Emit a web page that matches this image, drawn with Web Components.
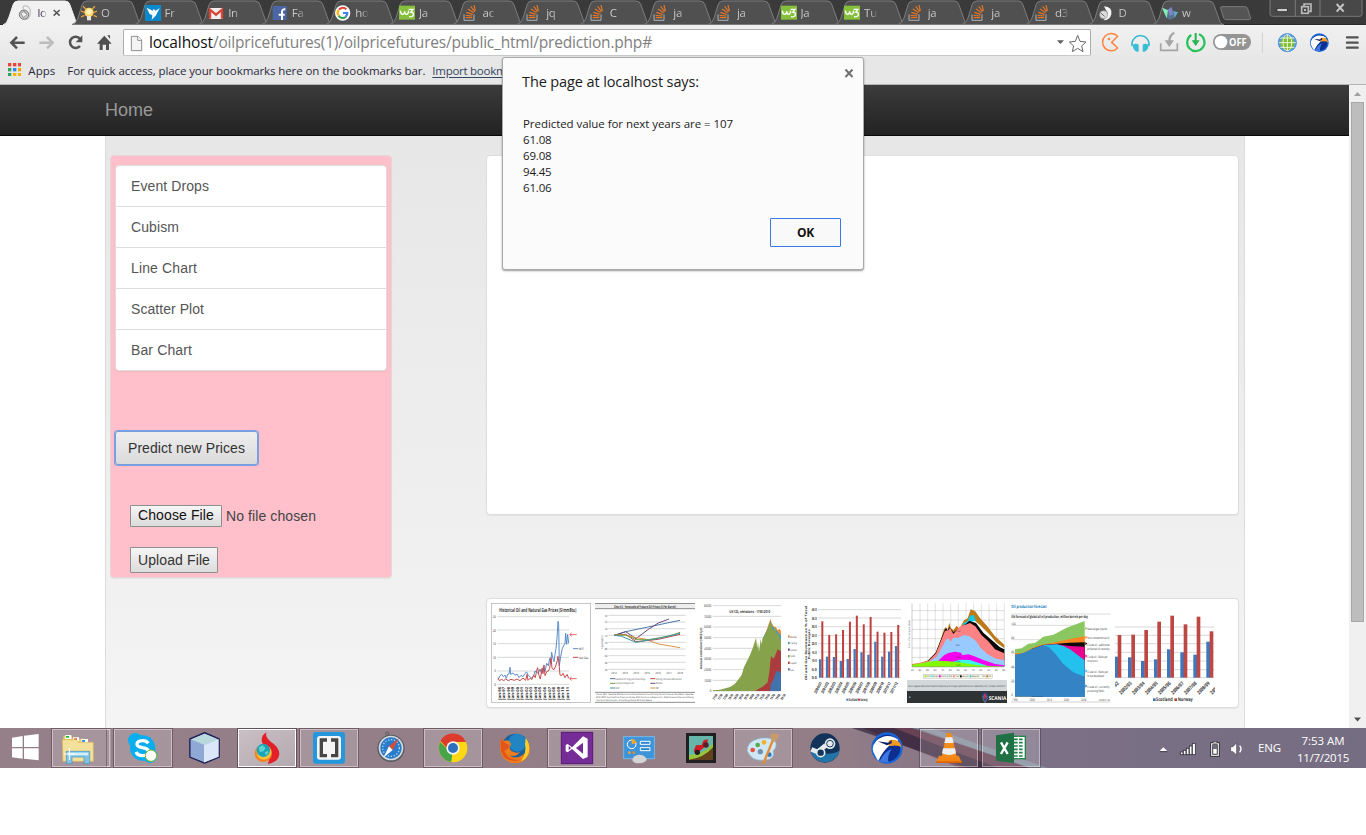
<!DOCTYPE html>
<html lang="en">
<head>
<meta charset="utf-8">
<title>localhost</title>
<style>
html,body{margin:0;padding:0;background:#fff;width:1366px;height:835px;overflow:hidden}
body{font-family:"Open Sans","Noto Sans",sans-serif;position:relative}
</style>
</head>
<body>
<desktop-screen></desktop-screen>
<script>
/* Icon table: [x, y, w, h, markup]; drawn at one third of its own units. */
const so = '<path d="M3 0v18h30V0" transform="translate(0 28)" fill="none" stroke="#a9b4bb" stroke-width="3"/><path d="M8 38h20M8 31l20 2M10 22l19 6M15 12l17 11M23 4l12 16M33 0l4 18" fill="none" stroke="#e2762a" stroke-width="3.6"/>';
const w3 = '<rect width="48" height="42" y="2" fill="#86bf3c"/><path d="M4 17q1 11 7 11 5 0 6-9 1 9 6 9 5 0 6-11M29 13h13l-7 8q9 0 8 8-1 8-13 6" fill="none" stroke="#fff" stroke-width="4"/>';
const eagle = '<circle r="47" fill="#1565d8"/><circle r="40" fill="#0d2f8f"/><path d="M-36 22A42 42 0 0 1-43 2Q-40-24-12-34 14-40 34-24L20-8 8-8Q-14 12-26 38-32 32-36 22z" fill="#fff"/><path d="M8-24Q40-30 44 0 36-10 8-6-2-14 8-24z" fill="#f79a22"/><path d="M-28-20 4-16 14-24 14-14 0-8z" fill="#10206a"/><path d="M-22 40Q-10 12 14 2 0 24 4 44z" fill="#3f77e0"/>';
const I = {
 fav0:[0,0,48,48,'<path d="M20 12Q14 2 26 2q14 4 14 20 0 18-14 22" fill="none" stroke="#c5c5c5" stroke-width="4"/><circle cx="21" cy="29" r="14" fill="#c9c9c9" stroke="#777" stroke-width="3"/><path d="M12 25q9-10 18 2-4 10-12 10zM20 16l6 10" fill="#eee" stroke="#777" stroke-width="2"/>'],
 bulb:[0,0,48,48,'<path d="M0 18l10 4M48 18l-9 4M6 4l8 8M42 4l-8 8M0 36l10-5M48 36l-10-5" stroke="#eda233" stroke-width="4"/><circle cx="24" cy="22" r="14" fill="#ffd768"/><circle cx="24" cy="20" r="8" fill="#fff2bd"/><rect x="18" y="33" width="12" height="13" fill="#e8e5dc"/>'],
 bird:[0,0,48,48,'<rect width="48" height="48" fill="#0b89cf"/><path d="M5 8 23 17 26 12 32 17 44 9 32 32 20 44 22 31 14 27z" fill="#fff"/>'],
 gmail:[0,0,48,48,'<rect x="3" y="9" width="42" height="33" rx="2" fill="#eee"/><path d="M6 41V14L24 29 42 14V41" fill="none" stroke="#d94436" stroke-width="7"/>'],
 fb:[0,0,48,48,'<rect x="2" y="3" width="42" height="42" fill="#4a66a5"/><path d="M30 45V29h8M20 29h10V20q0-8 10-7" fill="none" stroke="#fff" stroke-width="6"/>'],
 goog:[0,0,48,48,'<circle cx="23" cy="24" r="23" fill="#fff"/><g fill="none" stroke-width="6.5"><path d="M12 14A14 14 0 0 1 34 13" stroke="#e44134"/><path d="M11 32A14 14 0 0 1 11 15" stroke="#f6b90a"/><path d="M33 35A14 14 0 0 1 11 32" stroke="#33a551"/><path d="M24 24H37Q37 30 32 35" stroke="#3f80ef"/></g>'],
 w3:[0,0,48,48,w3], so:[0,0,48,48,so],
 dove:[0,0,48,48,'<path d="M18 4Q44 6 40 28 36 46 16 46 22 42 24 34 34 26 24 16z" fill="#f4f4f4"/><circle cx="17" cy="29" r="12" fill="#ddd" stroke="#999" stroke-width="2"/><path d="M8 24l12 10" stroke="#666" stroke-width="3"/>'],
 gem:[0,0,48,48,'<path d="M0 8 18 14 28 6 34 18 48 22 38 38 26 44 14 40z" fill="#53738e"/><path d="M0 8 18 16 14 40z" fill="#83edb4"/><path d="M18 14 28 6 34 28 22 32z" fill="#7f85c4"/><path d="M34 18 48 22 38 38z" fill="#5fa6c4"/>'],
 tabx:[0,0,30,48,'<path d="M5 15 23 32M23 15 5 32" stroke="#565656" stroke-width="4.5"/>'],
 newtab:[940,0,100,75,'<path d="M948 20H1018Q1024 20 1026 26L1035 55Q1035 59 1030 59H962Q956 59 954 54L945 25Q944 20 948 20z" fill="#555" stroke="#7b7b7b" stroke-width="3"/>'],
 win:[1089,0,291,54,'<path d="M1092 0V42Q1092 49 1100 49H1360Q1368 49 1368 42V0" fill="#484848" stroke="#797979" stroke-width="3"/><path d="M1168 0V49M1242 0V49" stroke="#797979" stroke-width="3"/><rect x="1113" y="25" width="31" height="10" fill="#ccc" stroke="#222" stroke-width="2"/><g fill="none" stroke="#b9b9b9" stroke-width="5"><path d="M1194 18V12H1215V34H1209"/><rect x="1187" y="20" width="20" height="20"/></g><rect x="1194" y="27" width="6" height="6" fill="#bbb"/><path d="M1292 12 1313 35M1313 12 1292 35" stroke="#c4c4c4" stroke-width="6"/>'],
 back:[0,75,105,96,'<path d="M74 128H35M51 111 34 128 51 145" fill="none" stroke="#535353" stroke-width="7.5"/>'],
 fwd:[105,75,90,96,'<path d="M118 128H157M141 111 158 128 141 145" fill="none" stroke="#bdbdbd" stroke-width="7.5"/>'],
 reload:[195,75,78,96,'<path d="M240 138A17 17 0 1 1 240 116" fill="none" stroke="#535353" stroke-width="7.5"/><path d="M247 106V127H227z" fill="#535353"/>'],
 home:[273,75,96,96,'<path d="M313 107 335 131H327V150H318V134H308V150H299V131H291zM322 106H330V117z" fill="#4f4f4f"/>'],
 page:[390,75,45,96,'<path d="M394 106H414L425 117V149H394z" fill="#f3f3f3" stroke="#8d8d8d" stroke-width="3"/><path d="M413 106V118H425" fill="#fff" stroke="#8d8d8d" stroke-width="3"/>'],
 star:[447,75,102,96,'<path d="M453 118H474L463 129z" fill="#5f5f5f"/><path d="M515 103 522 121 540 123 527 135 531 152 515 142 499 152 503 135 490 123 508 121z" fill="#fff" stroke="#686868" stroke-width="3" stroke-linejoin="round"/>'],
 pac:[555,75,102,96,'<path d="M635 109A26 26 0 1 0 635 144L617 127z" fill="none" stroke="#ff8340" stroke-width="4.5" stroke-linejoin="round"/><circle cx="609" cy="117" r="4" fill="#ff8340"/>'],
 phones:[657,75,90,96,'<path d="M678 138A26 26 0 1 1 729 138" fill="none" stroke="#25b4ce" stroke-width="4"/><path d="M680 134Q690 128 698 134V155H692Q680 149 680 134zM728 134Q718 128 710 134V155H716Q728 149 728 134z" fill="#39bdd5"/>'],
 inbox:[747,75,81,96,'<path d="M764 130V151H814V130" fill="none" stroke="#a5a5a5" stroke-width="5"/><path d="M805 98Q790 106 790 124" fill="none" stroke="#a5a5a5" stroke-width="7"/><path d="M776 121H804L790 141z" fill="#a5a5a5"/>'],
 down:[828,75,81,96,'<path d="M879 103A26 26 0 1 1 856 105" fill="none" stroke="#25c35a" stroke-width="6.5"/><path d="M869 99V126" stroke="#25b350" stroke-width="6"/><path d="M857 121H881L869 138z" fill="#25b350"/>'],
 off:[909,75,141,96,'<rect x="921" y="102" width="114" height="48" rx="24" fill="#949494"/><circle cx="945" cy="126" r="19" fill="#fff"/><text x="969" y="137" font-family="Open Sans,sans-serif" font-weight="700" font-size="29" fill="#fff" textLength="53" lengthAdjust="spacingAndGlyphs">OFF</text>'],
 sep:[1050,75,42,96,'<path d="M1069 98V158" stroke="#cfcfcf" stroke-width="3"/>'],
 globe:[1092,75,99,96,'<circle cx="1144" cy="128" r="28" fill="#5f9fe0"/><circle cx="1144" cy="130" r="21" fill="#7dbd2c"/><g fill="none" stroke="#e9f4dc" stroke-width="3"><ellipse cx="1144" cy="128" rx="13" ry="25"/><path d="M1144 101V155M1118 128H1170M1122 114H1166M1122 142H1166"/></g><circle cx="1144" cy="128" r="27" fill="none" stroke="#5294d8" stroke-width="3"/>'],
 eagles:[1191,75,99,96,'<g transform="translate(1240 128) scale(.6)">'+eagle+'</g>'],
 menu:[1290,75,90,96,'<path d="M1323 112H1355M1323 128H1355M1323 143H1355" stroke="#535353" stroke-width="7" stroke-linecap="round"/>'],
 apps:[24,189,40,40,['#ea4335','#ea4335','#ea4335','#34a060','#2c87f5','#f5a300','#34a060','#f5b400','#f5b400'].map((c,i)=>`<rect x="${24+i%3*15}" y="${189+(i/3|0)*15}" width="10" height="10" fill="${c}"/>`).join('')],
 startb:[0,24,153,120,'<path d="M36 53 68 48V81H36zM72 47 116 42V81H72zM36 85H68V116L36 112zM72 85H116V121L72 116z" fill="#fff"/>'],
 explorer:[153,24,180,120,'<path d="M190 47h24l4 9h38v67H190z" fill="#e6c967"/><path d="M196 45h18v12h-18zM219 52h18v12h-18zM244 57h20v12h-20z" fill="#fff"/><path d="M198 48h9v5h-9z" fill="#12b93c"/><path d="M222 55h9v5h-9z" fill="#e5522d"/><path d="M246 60h9v6h-9z" fill="#3097e8"/><path d="M187 59h42l5 8h46v57H189z" fill="#f3e09a" stroke="#ddb75a" stroke-width="2"/><path d="M199 94H269V131H252V111H216V131H199z" fill="#7fc2e4" stroke="#3f93bd" stroke-width="2"/><path d="M203 98h62v8h-62z" fill="#d2effa"/><path d="M208 84v36M192 102h34" stroke="#fff" stroke-width="3"/>'],
 skype:[339,24,180,120,'<circle cx="428" cy="84" r="38" fill="#08aeee"/><circle cx="406" cy="61" r="22" fill="#08aeee"/><circle cx="450" cy="107" r="22" fill="#08aeee"/><path d="M445 70Q438 61 427 62 411 63 411 73 411 80 427 83 446 86 446 96 444 107 428 107 413 107 408 96" fill="none" stroke="#fff" stroke-width="10"/><circle cx="453" cy="107" r="17" fill="#fff" stroke="#7fba20" stroke-width="3"/>'],
 cube:[525,24,180,120,'<path d="M614 38 657 57V111L614 129 570 111V57z" fill="#b7cbe9" stroke="#1d2058" stroke-width="5" stroke-linejoin="round"/><path d="M572 58 614 75V127L572 110z" fill="#8fa8d4"/><path d="M656 58 614 75V127L656 110z" fill="#dbe7f8"/><path d="M614 41 654 58 614 74 574 58z" fill="#b9d9dc"/><path d="M614 75V127" stroke="#fff" stroke-width="2"/>'],
 torch:[711,24,180,120,'<path d="M799 37Q795 53 812 65 838 80 838 103 836 126 803 132 812 111 807 93 787 76 785 62 784 46 799 37z" fill="#e3202a"/><circle cx="790" cy="100" r="26" fill="#f58320"/><circle cx="792" cy="97" r="22" fill="#fbc33c"/><circle cx="790" cy="91" r="20" fill="#19a5b8"/><path d="M776 82l12-6 8 7-4 9-12 5zM794 98l9-6 3 5-8 9z" fill="#62d0d0"/>'],
 brackets:[897,24,180,120,'<rect x="939" y="36" width="96" height="95" rx="9" fill="#2597dc"/><rect x="951" y="48" width="72" height="71" rx="9" fill="#f5f5f5"/><path d="M981 60H964V107H981M993 60H1010V107H993" fill="none" stroke="#464646" stroke-width="10"/>'],
 safari:[1083,24,180,120,'<circle cx="1162" cy="41" r="5" fill="none" stroke="#555" stroke-width="3"/><circle cx="1173" cy="85" r="41" fill="#565c62"/><circle cx="1173" cy="84" r="37" fill="#d7dadd"/><circle cx="1173" cy="84" r="32" fill="#2a7ccb"/><circle cx="1173" cy="84" r="25" fill="none" stroke="#a9d5ef" stroke-width="4" stroke-dasharray="4 5"/><path d="M1197 55 1178 90 1167 79z" fill="#e2472f"/><path d="M1150 113 1178 90 1167 79z" fill="#fff"/>'],
 chrome:[9,24,180,120,'<circle cx="99" cy="84" r="42" fill="#e8c61c"/><path d="M99 84 62 64A42 42 0 0 1 137 65z" fill="#dd3b2c"/><path d="M61 66A42 42 0 0 0 94 126L113 91 85 91z" fill="#47a447"/><path d="M137 65H99V84L94 126A42 42 0 0 0 137 65z" fill="#fbd813"/><path d="M62 62A42 42 0 0 1 137 65H99L82 86z" fill="#dd3b2c"/><circle cx="99" cy="84" r="20" fill="#f4f4f4"/><circle cx="99" cy="84" r="15" fill="#2e70bd"/>'],
 firefox:[195,24,180,120,'<circle cx="287" cy="83" r="42" fill="#1b619f"/><circle cx="292" cy="68" r="27" fill="#2285c3"/><path d="M244 55Q249 66 259 61 275 63 272 76 264 86 276 94 288 101 300 96 285 115 266 104 285 121 309 104 326 90 317 58 337 77 327 103 312 131 284 130 241 124 240 84 239 66 244 55z" fill="#ee7d1d"/><path d="M317 53Q331 69 327 96 320 119 303 124 321 98 315 73z" fill="#f7cf2c"/><path d="M244 55Q237 89 252 111 275 130 303 119 264 123 253 92 267 87 269 75 252 71 244 55z" fill="#e3551b"/>'],
 vs:[381,24,180,120,'<rect x="424" y="37" width="94" height="94" fill="#762c96" stroke="#5a1679" stroke-width="3"/><path d="M437 75 443 72 456 82 489 49 503 56V111L489 117 456 87 443 97 437 94zM446 78V91L453 84zM489 68 468 84 489 101z" fill="#fff" fill-rule="evenodd"/>'],
 control:[567,24,180,120,'<rect x="611" y="50" width="92" height="66" fill="#3e94d8" stroke="#75b8ea" stroke-width="3"/><circle cx="635" cy="73" r="13" fill="none" stroke="#fff" stroke-width="3"/><path d="M635 73V57A16 16 0 0 1 650 68z" fill="#f5a527"/><path d="M661 64H690V73H661zM661 83H690V92H661z" fill="#2a86cf" stroke="#fff" stroke-width="3"/><circle cx="628" cy="98" r="4" fill="#f5a527"/><circle cx="641" cy="98" r="4" fill="#e88b2d"/><path d="M637 120Q638 106 658 104 679 106 680 120 672 131 652 130 639 129 637 120z" fill="#d4d4d4"/>'],
 hill:[753,24,180,120,'<rect x="798" y="39" width="90" height="90" fill="#221f20"/><rect x="807" y="48" width="72" height="72" fill="#65b7a9"/><path d="M807 115Q851 113 879 78V120H807z" fill="#65421e"/><path d="M807 106Q850 104 879 71V82Q850 115 807 119z" fill="#96c53c"/><path d="M821 92 828 76 845 75 851 61 864 58 860 76 843 90 829 101z" fill="#ce1d24"/><circle cx="832" cy="97" r="8" fill="#28161a"/><circle cx="858" cy="75" r="8" fill="#55232a"/>'],
 paint:[939,24,180,120,'<path d="M982 93Q980 66 1013 57 1050 48 1065 64 1074 78 1059 93 1067 116 1036 120 995 126 982 93z" fill="#cfe7f4" stroke="#8ebcd6" stroke-width="2"/><circle cx="998" cy="90" r="7" fill="#e25142"/><circle cx="1013" cy="75" r="7" fill="#51ad45"/><circle cx="1032" cy="67" r="7" fill="#f2af28"/><circle cx="1021" cy="95" r="8" fill="#7291a8"/><circle cx="1048" cy="104" r="7" fill="#2f79c7"/><path d="M1030 131 1058 62" stroke="#e78a2e" stroke-width="7"/><path d="M1051 42Q1066 37 1077 45 1074 60 1063 65L1054 62z" fill="#c89c6a"/>'],
 steam:[1125,24,180,120,'<circle cx="1215" cy="84" r="44" fill="#12345a"/><path d="M1172 92A44 44 0 0 0 1258 92Q1230 110 1172 92z" fill="#2375a9"/><path d="M1174 88 1193 96 1217 76" fill="none" stroke="#e6eaee" stroke-width="14"/><circle cx="1230" cy="71" r="16" fill="#e6eaee"/><circle cx="1230" cy="71" r="10" fill="#e6eaee" stroke="#173b61" stroke-width="3"/><circle cx="1202" cy="98" r="12" fill="#12345a" stroke="#e6eaee" stroke-width="5"/>'],
 eagleb:[21,24,180,120,'<g transform="translate(111 84)">'+eagle+'</g>'],
 vlc:[207,24,180,120,'<path d="M267 107H326L336 128H258z" fill="#f48413"/><path d="M290 40Q297 37 304 40L320 108Q300 122 276 108z" fill="#f38b1a"/><path d="M287 52H307L311 69H283zM279 85H315L318 100Q298 110 276 100z" fill="#ededed"/><path d="M258 124H336V129H258z" fill="#db6507"/>'],
 excel:[393,24,180,120,'<rect x="485" y="49" width="41" height="67" fill="#fff" stroke="#218349" stroke-width="4"/><path d="M492 58H518M492 68H518M492 78H518M492 88H518M492 98H518M492 108H518" stroke="#218349" stroke-width="5"/><path d="M505 50V115" stroke="#fff" stroke-width="4"/><path d="M438 46 492 38V129L438 122z" fill="#207245"/><path d="M453 67 473 102M473 67 453 102" stroke="#fff" stroke-width="7"/>'],
 tray:[915,24,285,120,'<path d="M929 93 940 82 952 93z" fill="#fff"/><path d="M929 95H952" stroke="#484252" stroke-width="3"/><g fill="#fff" stroke="#38343f" stroke-width="2.5"><rect x="991" y="96" width="8" height="8"/><rect x="1000" y="91" width="8" height="13"/><rect x="1009" y="85" width="8" height="19"/><rect x="1018" y="78" width="8" height="26"/><rect x="1027" y="70" width="9" height="34"/></g><rect x="1082" y="68" width="26" height="41" fill="#fff" stroke="#302d35" stroke-width="3"/><rect x="1089" y="64" width="12" height="5" fill="#fff" stroke="#302d35" stroke-width="2"/><rect x="1088" y="74" width="14" height="29" fill="#716b7d" stroke="#302d35" stroke-width="2"/><rect x="1090" y="87" width="10" height="14" fill="#fff"/><path d="M1142 80H1149L1160 68V106L1149 95H1142z" fill="#fff" stroke="#45404e" stroke-width="2"/><path d="M1169 77Q1177 87 1169 97" fill="none" stroke="#fff" stroke-width="4"/>']
};
const define=(n,html,setup)=>customElements.define(n,class extends HTMLElement{
  connectedCallback(){ if(this.shadowRoot)return; const r=this.attachShadow({mode:'open'}); r.innerHTML=typeof html==='function'?html(this):html; if(setup)setup(this,r); }
});
define('ui-icon',el=>{const [x,y,w,h,m]=I[el.getAttribute('name')];
 return `<style>:host{display:block;flex:none;width:${w/3}px;height:${h/3}px}svg{display:block}</style><svg width="${w/3}" height="${h/3}" viewBox="${x} ${y} ${w} ${h}">${m}</svg>`});

/* Text that tracks its letters to a given width. */
define('fit-text','<style>:host{display:inline-block;white-space:pre}</style><slot></slot>',el=>{
 const w=+el.getAttribute('w'),n=el.textContent.length,c=el.getBoundingClientRect().width;
 el.style.letterSpacing=((w-c)/n).toFixed(3)+'px';});

define('browser-tab',el=>{const a=el.hasAttribute('active');
 const p=a?'M-6 25Q-2 24 0 17L4 5Q5 1 9 1H56Q60 1 61 5L66 19Q67 25 71 25z':'M-1 24.5Q3 24 5 18L9 5Q10 1 14 1H55Q59 1 60 5L65 19Q66 24 70 24.5z';
 return `<style>:host{display:grid;grid-template-columns:16px 18px 12px;column-gap:4px;padding-left:8.4px;box-sizing:border-box;width:63.6px;height:25px;flex:none;position:relative;font-size:11.5px;line-height:25px;color:${a?'#493559':'#c8c8c8'}}
 .s{position:absolute;left:0;top:0;overflow:visible}ui-icon{position:relative;margin-top:5px}span{position:relative;overflow:hidden;${a?'width:10px':'width:14px'};white-space:nowrap;letter-spacing:-.3px;-webkit-mask:linear-gradient(90deg,#000 45%,transparent)}
 .x{margin-left:-7px}</style><svg class="s" width="64" height="25"><path d="${p}" fill="${a?'#f1f1f1':'#505050'}" stroke="${a?'#f1f1f1':'#7c7c7c'}"/></svg><ui-icon name="${el.getAttribute('icon')}"></ui-icon><span><slot></slot></span>${a?'<ui-icon class="x" name="tabx"></ui-icon>':''}`});

const tabs=[['fav0','lo'],['bulb','O'],['bird','Fr'],['gmail','In'],['fb','Fa'],['goog','ho'],['w3','Ja'],['so','ac'],['so','jq'],['so','C'],['so','ja'],['so','ja'],['w3','Ja'],['w3','Tu'],['so','ja'],['so','ja'],['so','d3'],['dove','D'],['gem','w']];
define('tab-strip',`<style>:host{display:flex;height:25px;background:#3a3a3a;padding-left:9px;box-sizing:border-box;border-bottom:1px solid #2c2c2c}
 .n{margin-left:2px}.w{margin-left:16px}</style>${tabs.map((t,i)=>`<browser-tab icon="${t[0]}"${i?'':' active'}>${t[1]}</browser-tab>`).join('')}<ui-icon class="n" name="newtab"></ui-icon><ui-icon class="w" name="win"></ui-icon>`);

define('nav-toolbar',`<style>:host{display:flex;height:32px;background:linear-gradient(#f1f1f1,#e8e8e8)}
 .u{display:flex;box-sizing:border-box;width:968px;height:27px;margin-top:4px;background:#fff;border:1px solid #adadad;border-bottom-color:#c8c8c8;border-radius:2px;align-items:center;font-size:15.5px;line-height:25px;color:#808080}
 .u ui-icon{margin-top:-2px;height:32px}.p{margin-left:6px}.t{margin-left:4px;flex:1;white-space:nowrap;margin-top:0}b{font-weight:400;color:#111}.b{margin-right:1px}</style>
 <ui-icon name="back"></ui-icon><ui-icon name="fwd"></ui-icon><ui-icon name="reload"></ui-icon><ui-icon name="home"></ui-icon>
 <div class="u"><ui-icon class="p" name="page"></ui-icon><div class="t"><b><fit-text w="64">localhost</fit-text></b><fit-text w="439">/oilpricefutures(1)/oilpricefutures/public_html/prediction.php#</fit-text></div><ui-icon class="b" name="star"></ui-icon></div>
 ${['pac','phones','inbox','down','off','sep','globe','eagles','menu'].map(n=>`<ui-icon name="${n}"></ui-icon>`).join('')}`);

define('bookmarks-bar',`<style>:host{display:flex;height:28px;box-sizing:border-box;background:#e7e7e7;border-bottom:1px solid #b4b4b4;padding-left:8px;font-size:11.5px;line-height:27px;color:#2a2a3c}
 ui-icon{margin:6px 7px 0 0}.a{margin-right:12px}.m{margin-right:7px}.l{text-decoration:underline;text-underline-offset:2px;color:#34465e}</style>
 <ui-icon name="apps"></ui-icon><fit-text class="a" w="27">Apps</fit-text><fit-text class="m" w="358">For quick access, place your bookmarks here on the bookmarks bar.</fit-text><fit-text class="l" w="74">Import bookm</fit-text>`);

define('nav-list','<style>:host{display:block;box-sizing:border-box;height:206px;background:#fff;border:1px solid #ddd;border-radius:4px;box-shadow:0 1px 2px rgba(0,0,0,.06)}</style><slot></slot>');
define('nav-item','<style>:host{display:block;box-sizing:border-box;height:41px;padding-left:15px;line-height:40px;color:#555;border-bottom:1px solid #ddd}:host(:last-child){border:0}</style><slot></slot>');

define('side-panel',`<style>:host{display:block;box-sizing:border-box;width:282px;height:423px;background:#ffc0cb;border:1px solid #e9d4d8;border-radius:4px;padding:9px 4px 0;box-shadow:0 1px 1px rgba(0,0,0,.05);font:14px/20px "Liberation Sans",Arial,sans-serif}
 button{display:block;font:inherit;padding:0;box-sizing:border-box}
 .p{width:143px;height:34px;margin:60px 0 0;border:1px solid #74a0e0;border-radius:3px;background:linear-gradient(#eee,#dadada);color:#333;box-shadow:0 0 0 1px #7f9fe0;outline:0}
 .f{display:flex;gap:4px;margin:40px 0 0 15px;line-height:22px;color:#444}
 .c{width:92px;height:22px;line-height:19px;padding-bottom:1px;border:1px solid #8f8f8f;border-radius:1px;background:linear-gradient(#f6f6f6,#dcdcdc);color:#111}
 .u{width:88px;height:26px;border:1px solid #8f8f8f;border-radius:1px;background:linear-gradient(#f6f6f6,#dcdcdc);color:#333;margin:20px 0 0 15px}</style>
 <nav-list><nav-item><fit-text w="78">Event Drops</fit-text></nav-item><nav-item><fit-text w="48">Cubism</fit-text></nav-item><nav-item><fit-text w="66">Line Chart</fit-text></nav-item><nav-item><fit-text w="73">Scatter Plot</fit-text></nav-item><nav-item><fit-text w="61">Bar Chart</fit-text></nav-item></nav-list>
 <button class="p"><fit-text w="117">Predict new Prices</fit-text></button><div class="f"><button class="c"><fit-text w="76">Choose File</fit-text></button><fit-text w="90">No file chosen</fit-text></div><button class="u"><fit-text w="72">Upload File</fit-text></button>`);

/* Charts, in a 300-unit square whose origin is given first. */
const T=(x,y,s,w,t,o='')=>`<text x="${x}" y="${y}" font-size="${s}" textLength="${w}" lengthAdjust="spacingAndGlyphs" ${o}>${t}</text>`;
const L=(x1,x2,ys,c='#b5b5b5',w=1.6)=>`<path d="${ys.map(y=>`M${x1} ${y}H${x2}`).join('')}" stroke="${c}" stroke-width="${w}" fill="none"/>`;
const P=(d,c,w=3)=>`<polyline points="${d}" fill="none" stroke="${c}" stroke-width="${w}" stroke-linejoin="round"/>`;
const A=(d,c)=>`<polygon points="${d}" fill="${c}"/>`;
const seq=(n,f)=>Array.from({length:n},(_,i)=>f(i)).join('');
const C={
 oil:[18,24,'<rect x="19" y="25" width="298" height="297" fill="#fff" stroke="#aaa" stroke-width="2"/>'+T(43,52,17,231,'Historical Oil and Natural Gas Prices ($/mmBtu)','font-weight="700"')+L(37,252,[65,105,146,187,228,268])
  +[25,20,15,10,5,0].map((v,i)=>T(v>9?23:28,69+i*40.6,11,v>9?10:5,v)).join('')
  +P('39,254 45,242 50,238 55,245 60,240 64,250 68,238 72,237 75,217 77,238 84,234 90,241 96,237 102,248 108,241 114,245 120,235 125,231 130,242 136,246 140,250 146,242 150,228 155,232 160,235 165,222 170,236 175,215 180,230 185,205 190,212 194,190 197,205 200,172 203,188 207,200 210,178 213,160 216,130 219,79 221,88 223,212 227,185 232,160 237,150 240,145 242,115 245,148 248,118 251,145','#5b8cc9')
  +P('39,248 43,257 50,253 56,257 62,252 70,257 78,253 88,256 96,252 105,257 114,249 122,256 126,238 129,256 136,249 140,254 146,240 151,248 155,226 158,218 162,242 166,252 171,220 174,236 177,210 180,242 185,230 190,228 194,220 198,188 201,220 207,224 212,213 217,196 219,184 222,206 225,240 230,242 234,235 240,248 246,238 251,250','#c84a4b')
  +'<path d="M275 119H255M260 114L254 119 260 124M275 251H255M260 246L254 251 260 256" fill="none" stroke="#e4474a" stroke-width="2.5"/><path d="M264 161H280" stroke="#5b8cc9" stroke-width="3"/><path d="M264 187H280" stroke="#c84a4b" stroke-width="3"/>'+T(282,165,10,15,'WTI')+T(282,191,10,28,'Nat Gas')
  +seq(16,i=>`<text transform="translate(${47+i*13.6} 314) rotate(-90)" font-size="12" font-weight="700" textLength="38" lengthAdjust="spacingAndGlyphs">Jan-${String((96+i)%100).padStart(2,'0')}</text>`)],
 forecast:[330,24,'<rect x="330" y="25" width="300" height="298" fill="#fff"/><path d="M330 26h300v15H330z" fill="#eee"/><path d="M330 25.500H630M330 41H630M330 292H630M330 322H630" stroke="#777" stroke-width="2.500"/>'+T(387,38,11,186,'Chart 3 - Forecasts of Future Oil Prices ($ Per Barrel)','font-weight="700"')+L(370,602,[61,81,101,121,142,162,182,202,223])
  +seq(9,i=>T(359,65+i*20.2,9,8,180-i*20))+seq(7,i=>T(379+i*33,237,9,17,2012+i))
  +`<text transform="translate(355 162) rotate(-90)" font-size="8" textLength="40">$ per barrel</text>`
  +P('388,121 422,110 585,76','#4c78a8')+P('388,121 422,110 453,131 490,103 520,84 552,72','#674984')+P('388,120 422,120 453,128 480,132 520,147 585,158','#dc9443')+P('388,121 422,118 453,140 520,133 585,118','#b94a4d')+P('388,119 422,120 453,134 490,134 550,124 585,112','#7d9b44')+P('388,121 410,124 453,142 520,130 585,115','#379aa3')
  +[['Department for Energy and Climate Change','US Energy Information Administration','#4c78a8','#b94a4d'],['Economist Intelligence Unit','World Bank','#7d9b44','#674984'],['OECD','IMF','#379aa3','#dc9443']].map((r,i)=>`<path d="M375 ${251+i*14}H390" stroke="${r[2]}" stroke-width="3"/><path d="M496 ${251+i*14}H511" stroke="${r[3]}" stroke-width="3"/>`+T(391,254+i*14,8,[90,57,12][i],r[0])+T(512,254+i*14,8,[78,20,9][i],r[1])).join('')
  +T(334,301,7.5,292,'Source: DECC - December 2012; Economic and Fiscal Outlook, Ernst and Young; Economic Forecast; World Bank - December')+T(334,310,7.5,292,'2012; OECD; Fossil Fuel Price Projections October 2012; Economist Intelligence Unit - Global Forecasting Service; US Energy')+T(334,319,7.5,166,'Information Administration - Annual Energy Outlook 2012, Early Release')],
 co2:[-3,24,L(38,243,[32,64,96,128,160,192,224,256,288])+seq(9,i=>T(i<8?12:29,36+i*32,11,i<8?22:5,i<8?80000-i*10000:0))
  +`<text transform="translate(6 222) rotate(-90)" font-size="9" font-weight="700" textLength="124" lengthAdjust="spacingAndGlyphs">Annual emissions (MtC/yr)</text>`
  +A('195,120 205,90 212,71 215,84 222,95 228,96 232,106 240,101 243,110 243,288 195,288','#ea8b35')
  +A('190,125 205,98 212,78 215,90 222,98 228,104 234,112 243,122 243,288 190,288','#4a9bbb')
  +A('38,288 38,286 60,284 90,276 105,266 118,250 125,240 132,216 140,200 150,180 158,160 168,128 172,160 174,140 177,170 182,132 185,148 188,128 192,126 197,112 204,102 209,81 212,86 216,88 218,106 224,100 230,116 236,120 243,138 243,288','#86a34c')
  +A('165,288 190,274 203,262 208,230 213,182 218,190 222,190 227,178 233,163 243,169 243,288','#ac3b3e')
  +A('210,288 212,268 220,256 227,234 232,227 237,229 243,234 243,288','#4272aa')
  +T(88,54,12,122,'UK CO₂ emissions - 1750-2010','font-weight="700"')+[['Bunker','#e58637'],['Flaring','#4a9bbb'],['Cement','#674984'],['Solid','#86a34c'],['Liquid','#ac3b3e'],['Gas','#4272aa']].map((r,i)=>`<rect x="264" y="${121+i*19.7}" width="5" height="7" fill="${r[1]}"/>`+T(271,128+i*19.7,9,[20,20,20,14,18,10][i],r[0])).join('')
  +seq(14,i=>`<text transform="translate(${42+i*15.7} 316) rotate(-55)" font-size="10" font-weight="700" textLength="20" lengthAdjust="spacingAndGlyphs">${1750+i*20}</text>`)],
 bars:[309,24,L(354,603,[44,69,95,121,146,171,197,222,248])
  +[79,120,118,105,80,62,88,66,110,113,111,90].map((y,i)=>`<rect x="${357+i*20.7}" y="${[193,185,186,198,192,162,172,179,140,185,170,153][i]}" width="7" height="${248-[193,185,186,198,192,162,172,179,140,185,170,153][i]}" fill="#4478bb"/><rect x="${364+i*20.7}" y="${y}" width="6" height="${248-y}" fill="#bd413f"/>`
   +`<text transform="translate(${349+i*20.7} 296) rotate(-62)" font-size="12" font-weight="700" textLength="37" lengthAdjust="spacingAndGlyphs">${2000+i}/${String(i+1).padStart(2,'0')}</text>`).join('')
  +seq(9,i=>T(335,48+i*25.5,12,15,i<8?(40-i*5)+'.0':'0.0','font-weight="700"'))
  +`<text transform="translate(321 256) rotate(-90)" font-size="9" font-weight="700" textLength="224" lengthAdjust="spacingAndGlyphs">Oil and Gas Revenues as % of Total</text><text transform="translate(331 193) rotate(-90)" font-size="8" font-weight="700" textLength="90" lengthAdjust="spacingAndGlyphs">Public Receipts</text>`
  +'<rect x="439" y="311" width="6" height="6" fill="#4478bb"/><rect x="474" y="311" width="6" height="6" fill="#bd413f"/>'+T(446,318,12,27,'Scotland','font-weight="700"')+T(481,318,12,22,'Norway','font-weight="700"')],
 scania:[21,24,'<path d="M21 24h300v300H21z" fill="#fff"/>'+L(36,313,[47,75,103,131,159,187],'#999',1)+`<path d="${seq(12,i=>`M${60+i*23} 25V216`)}" stroke="#aaa"/>`
  +A('36,214 36,207 60,204 85,196 105,176 120,140 132,103 138,95 142,106 148,83 152,98 160,106 170,92 178,102 192,76 203,70 212,43 225,48 240,69 262,94 285,124 313,149 313,214','#bd7a17')
  +A('190,120 190,84 202,79 210,62 222,60 228,80 243,95 270,120 290,145 313,160 313,214 190,214','#14cbe5')
  +A('207,120 207,80 225,78 240,90 270,120 290,143 313,160 313,214 207,214','#fff')
  +A('80,214 85,196 108,172 120,140 135,103 140,100 142,108 148,96 160,112 200,85 208,77 228,84 250,113 275,135 300,157 313,163 313,214','#080808')
  +A('36,214 36,209 85,198 108,175 120,145 135,107 145,106 150,98 160,117 180,94 200,88 210,84 226,94 245,121 265,139 285,163 313,175 313,214','#fc8283')
  +A('36,214 85,201 110,185 128,153 138,134 145,130 152,140 160,128 175,128 190,121 208,123 228,138 242,159 262,177 285,190 313,196 313,214','#98caff')
  +A('36,214 90,206 115,197 132,181 145,174 165,170 183,173 187,181 205,178 223,184 250,195 285,207 313,211 313,214','#f600f0')
  +A('135,210 140,203 160,200 177,194 210,195 230,202 258,211 258,215 135,215','#3df6e9')
  +A('36,215 36,209 65,205 95,199 115,197 145,199 175,202 205,206 235,211 313,215','#82fb00')
  +`<path d="M36 25V216H313" stroke="#666" fill="none"/>`
  +[['P-Gulf',175,112],['Other',173,153],['Russia',175,190],['Europe',175,201],['US-48',175,212]].map(r=>T(r[1]-6,r[2],7,12,r[0])).join('')+seq(13,i=>T(32+i*22.9,228,8,9,String((30+i*10)%100).padStart(2,'0')))
  +'<rect x="70" y="238" width="207" height="12" fill="#f8f8e9" stroke="#999"/>'+[['US-48',74,12],['Europe',94,15],['Russia',117,15],['Other',140,11],['P-Gulf',159,13],['Heavy etc.',180,21],['Deepwater',209,23],['Polar',240,11],['NGL',259,9]].map((t,i)=>`<rect x="${t[1]}" y="241" width="5" height="6" fill="${['#82fb00','#3df6e9','#f600f0','#98caff','#fc8283','#000','#14cbe5','#fff','#bd7a17'][i]}"/>`+T(t[1]+6,247,7,t[2],t[0])).join('')
  +'<rect x="21" y="255" width="300" height="34" fill="#d2d7da"/><rect x="21" y="288" width="300" height="36" fill="#303334"/>'+T(24,276,8,292,'Source: Uppsala Hydrocarbon Depletion Study Group, Oil and gas liquids 2004 Scenario, Updated by Colin J. Campbell, 2004-05-15')
  +`<circle cx="255" cy="301" r="9" fill="#243f87"/><path d="M249 303h12v9l-6 11-6-11z" fill="#243f87" stroke="#aaa" stroke-width="1.5"/><path d="M252 296h6l-2 16h-3z" fill="#d33"/>`+T(266,316,16,53,'SCANIA','font-weight="700" fill="#fff"')+`<text transform="translate(29 160) rotate(-90)" font-size="7" textLength="84" lengthAdjust="spacingAndGlyphs">Billions of Barrels a year (Gb/a)</text><circle cx="29" cy="307" r="3" fill="#7b8bad"/>`],
 production:[333,24,T(334,38,13,106,'Oil production forecast','font-weight="700" fill="#157ab8"')+L(333,631,[57],'#bbb')+T(334,70,12,230,'IEA forecast of global all-oil production, million barrels per day','font-weight="700"')+L(333,556,[91,134,176,219,262],'#bbb')
  +A('345,305 345,162 365,160 385,146 405,144 430,125 460,119 500,98 530,87 554,78 554,305','#8bc760')
  +A('345,305 345,175 370,173 395,160 420,150 470,141 510,132 554,124 554,305','#fb8423')
  +A('395,162 430,150 470,146 510,143 554,142 554,305 395,305','#080808')
  +A('430,150 470,148 510,153 554,155 554,305 430,305','#e80491')
  +A('430,150 470,148 490,153 510,163 554,196 554,305 430,305','#24c1ef')
  +A('345,305 345,179 370,174 395,162 430,150 447,157 465,175 490,207 520,232 554,245 554,305','#3484c5')
  +[0,1,2,3,4,5].map(i=>T(334,90+i*42.600,10,i===5?5:i?9:13,100-i*20,'fill="#555"')).join('')+['1990','2000','2010','2020','2030'].map((t,i)=>T(337+i*51.5,318,10,16,t,'fill="#444"')).join('')+T(597,317,8,33,'SOURCE: IEA')
  +[[101,'#8bc760','Natural gas liquids'],[128,'#fb8423','Non-conventional oil'],[147,'#111','Crude oil - additional','enhanced oil recovery'],[184,'#e80491','Crude oil - fields yet','to be found'],[229,'#24c1ef','Crude oil - fields yet','to be developed'],[274,'#3484c5','Crude oil - currently','producing fields']].map((r,i)=>`<path d="M556 ${r[0]-6}l6 5-6 5z" fill="${r[1]}"/>`+T(562,r[0]+5,10,[59,66,67,60,61,66][i],r[2])+(r[3]?T(562,r[0]+17,10,[0,0,67,30,50,50][i],r[3]):'')).join('')+'<path d="M333 321H631" stroke="#bbb" stroke-width="2"/>'],
 norway:[645,24,L(645,943,[96,121,146,172,198,224,248])
  +[[653,120,185],[694,119,187],[733,105,198],[772,80,193],[811,62,163],[851,88,172],[890,65,179],[929,109,140]].map(r=>`<rect x="${r[0]-10}" y="${r[2]}" width="11" height="${248-r[2]}" fill="#3f77bd"/><rect x="${r[0]}" y="${r[1]}" width="11" height="${248-r[1]}" fill="#bd4743"/>`).join('')
  +seq(9,i=>`<text transform="translate(${624+i*39} 299) rotate(-45)" font-size="15" font-weight="700" textLength="47" lengthAdjust="spacingAndGlyphs">${2001+i}/${String(2+i).padStart(2,'0')}</text>`)
  +'<rect x="759" y="310" width="8" height="8" fill="#3f77bd"/><rect x="823" y="310" width="8" height="8" fill="#bd4743"/>'+T(768,319,15,50,'Scotland','font-weight="700"')+T(833,319,15,45,'Norway','font-weight="700"')]
};
define('chart-thumb',el=>{const c=C[el.getAttribute('kind')];return `<style>:host{display:block;width:100px;height:100px;flex:none}svg{display:block;overflow:hidden;font-family:"Open Sans",sans-serif}text{fill:#333;text-rendering:geometricPrecision}text[fill="#fff"]{fill:#fff}text[fill="#157ab8"]{fill:#157ab8}</style><svg width="100" height="100" viewBox="${c[0]} ${c[1]} 300 300">${c[2]}</svg>`});

define('content-panel','<style>:host{display:flex;gap:4px;box-sizing:border-box;width:753px;background:#fff;border:1px solid #ddd;border-radius:4px;padding:4px;box-shadow:0 1px 1px rgba(0,0,0,.05)}</style><slot></slot>');
define('site-page',`<style>:host{display:block;flex:1;background:#fff;font-family:"Liberation Sans",Arial,sans-serif}
 nav{box-sizing:border-box;height:51px;padding-left:105px;background:linear-gradient(#3c3c3c,#222);border-bottom:1px solid #080808;font-size:18px;line-height:50px;color:#999}
 main{display:flex;box-sizing:border-box;width:1140px;height:592px;margin-left:105px;border:solid #dcdcdc;border-width:0 1px;background:linear-gradient(#e7e7e7,#f4f4f4);padding:19px 0 0 4px}
 section{margin-left:94px;display:flex;flex-direction:column;gap:83px}.a{height:360px}.b{height:110px}</style>
 <nav>Home</nav><main><side-panel></side-panel><section><content-panel class="a"></content-panel><content-panel class="b">${Object.keys(C).map(k=>`<chart-thumb kind="${k}"></chart-thumb>`).join('')}</content-panel></section></main>`);
define('scroll-bar',`<style>:host{display:flex;flex-direction:column;align-items:center;width:17px;box-sizing:border-box;background:#f0f0f0}i{display:block;width:11px;height:518px;background:#bdbdbd;border:1px solid #a8a8a8}svg{display:block}</style>
 <svg width="17" height="17"><path d="M5 11 8.500 7 12 11z" fill="#a0a0a0"/></svg><i></i><svg width="17" height="106"><path d="M5 95.500H12L8.500 99.500z" fill="#505050"/></svg>`);

define('alert-dialog',`<style>:host{position:absolute;left:502px;top:57px;width:362px;height:213px;box-sizing:border-box;background:#fbfbfb;border:1px solid #a9a9a9;border-radius:3px;box-shadow:0 1px 2px rgba(0,0,0,.4);padding:14px 22px 0 19px;display:flex;flex-direction:column;color:#1c1c1c;font-size:11.5px;line-height:16px}
 header{display:flex;justify-content:space-between;font-size:14.500px;line-height:20px;height:20px;margin-bottom:24px}header svg{margin:-6px -16px 0 0}
 .l{height:16px;margin-left:1px}button{align-self:flex-end;margin-top:22px;width:71px;height:29px;padding:0;border:1px solid #3b78e7;border-radius:1px;background:#f9f9f9;font:700 12px "Open Sans",sans-serif;color:#111}</style>
 <header><fit-text w="177">The page at localhost says:</fit-text><svg width="16" height="16"><path d="M4.500 3.500 11.500 11M11.500 3.500 4.500 11" stroke="#707070" stroke-width="2"/></svg></header>
 <div class="l"><fit-text w="210">Predicted value for next years are = 107</fit-text></div>${['61.08','69.08','94.45','61.06'].map(t=>`<div class="l"><fit-text w="28.500">${t}</fit-text></div>`).join('')}
 <button><fit-text w="17">OK</fit-text></button>`);

define('task-button',el=>{const s=el.getAttribute('state')||'';const b={open:'background:rgba(255,255,255,.17);border-color:rgba(255,255,255,.4);outline:1px solid rgba(70,50,60,.45)',active:'background:linear-gradient(150deg,#cabfc5,#b5a9b0);border-color:#fff;outline:1px solid rgba(70,50,60,.6)'}[s]||'border-color:transparent';
 return `<style>:host{display:block;width:62px;height:40px;flex:none}div{box-sizing:border-box;width:58px;height:38px;margin:1px;border:1px solid;outline-offset:0;${b}}ui-icon{margin:-2px}</style><div><ui-icon name="${el.getAttribute('icon')}"></ui-icon></div>`});
define('task-bar',`<style>:host{display:flex;height:40px;overflow:hidden;position:relative;background:linear-gradient(90deg,#95808a,#937e88 61%,#847486 70%,#7b7086 76%,#756d82);color:#fff;font-size:11.500px}
 .bg{position:absolute;left:840px;top:0}ui-icon,task-button{position:relative}.e{position:absolute;left:106px;top:1px;width:3px;height:36px;border:1px solid rgba(255,255,255,.4);border-left-color:rgba(70,50,60,.4)}
 .t{margin-left:112px}.g{line-height:40px;margin-left:8px}.c{margin-left:16px;display:flex;flex-direction:column;align-items:center;line-height:17px;padding-top:4px}</style>
 <svg class="bg" width="210" height="40"><path d="M22 0H76L190 40H120z" fill="#5e3043" opacity=".75"/><path d="M12 0H54L105 20 158 40H128z" fill="#33283e" opacity=".7"/><path d="M72 0H92L208 40H190z" fill="#87a0ab" opacity=".6"/></svg>
 <ui-icon name="startb"></ui-icon>
 ${[['explorer','open'],['skype','open'],['cube'],['torch','active'],['brackets','open'],['safari'],['chrome','open'],['firefox'],['vs','open'],['control'],['hill'],['paint','open'],['steam'],['eagleb'],['vlc','open'],['excel','open']].map(t=>`<task-button icon="${t[0]}" state="${t[1]||''}"></task-button>`).join('')}
 <span class="e"></span><ui-icon class="t" name="tray"></ui-icon><fit-text class="g" w="23">ENG</fit-text><div class="c"><fit-text w="43">7:53 AM</fit-text><fit-text w="52">11/7/2015</fit-text></div>`);

define('desktop-screen',`<style>:host{display:flex;flex-direction:column;width:1366px;height:768px;position:relative}.v{display:flex;height:643px}</style>
 <tab-strip></tab-strip><nav-toolbar></nav-toolbar><bookmarks-bar></bookmarks-bar><div class="v"><site-page></site-page><scroll-bar></scroll-bar></div><task-bar></task-bar><alert-dialog></alert-dialog>`);
</script>
</body>
</html>
